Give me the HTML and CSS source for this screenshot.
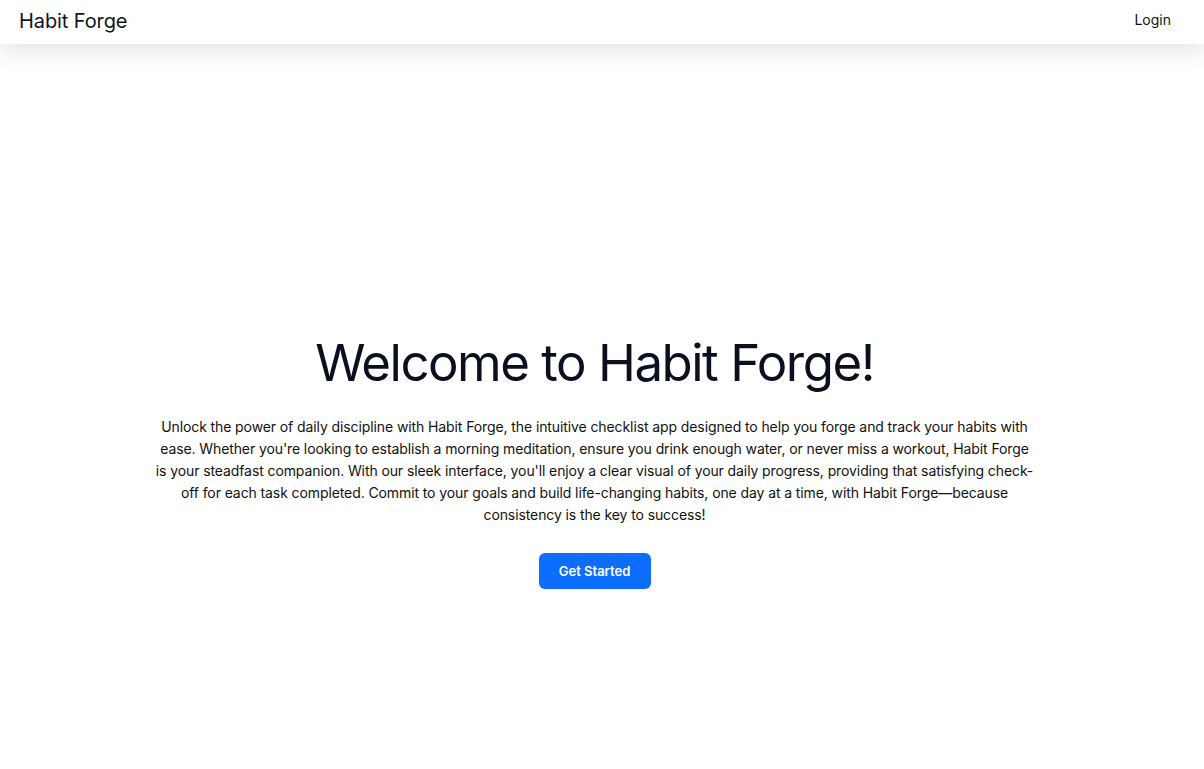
FILE: index.html
```html
<!DOCTYPE html>
<html lang="en">
<head>
<meta charset="utf-8">
<title>Habit Forge</title>
<link rel="stylesheet" href="styles.css">
</head>
<body>
<header class="topbar">
  <div class="brand">Habit Forge</div>
  <a class="login" href="#">Login</a>
</header>
<main class="hero">
  <h1 class="title">Welcome to Habit Forge!</h1>
  <p class="lead">Unlock the power of daily discipline with Habit Forge, the intuitive checklist app designed to help you forge and track your habits with ease. Whether you're looking to establish a morning meditation, ensure you drink enough water, or never miss a workout, Habit Forge is your steadfast companion. With our sleek interface, you'll enjoy a clear visual of your daily progress, providing that satisfying check-off for each task completed. Commit to your goals and build life-changing habits, one day at a time, with Habit Forge—because consistency is the key to success!</p>
  <button class="cta">Get Started</button>
</main>
</body>
</html>
```

FILE: styles.css
```css
* { box-sizing: border-box; }
html, body { margin: 0; padding: 0; background: #ffffff; }
body {
  font-family: Inter, "Noto Sans", "Liberation Sans", sans-serif;
  color: #111;
  -webkit-font-smoothing: antialiased;
  min-height: 769px;
}
.topbar {
  height: 44px;
  display: flex;
  align-items: center;
  justify-content: space-between;
  padding: 0 33px 0 19px;
  background: #fff;
  box-shadow: 0 6px 26px rgba(0, 0, 0, 0.12);
  position: relative;
  z-index: 1;
}
.brand {
  font-size: 20px;
  color: #0f1424;
  letter-spacing: -0.1px;
  line-height: 1;
  padding-bottom: 2px;
}
.login {
  font-size: 14px;
  color: #111;
  text-decoration: none;
  padding-bottom: 6px;
}
.hero {
  display: flex;
  flex-direction: column;
  align-items: center;
  padding: 288px 15px 0 0;
}
.title {
  margin: 0;
  font-size: 51px;
  font-weight: 400;
  line-height: 1.2;
  letter-spacing: -1.5px;
  color: #0b1020;
}
.lead {
  max-width: 880px;
  margin: 23px 0 0;
  text-align: center;
  font-size: 14px;
  line-height: 22px;
  letter-spacing: -0.1px;
  color: #111;
}
.cta {
  margin-top: 27px;
  width: 112px;
  height: 36px;
  border: 0;
  border-radius: 6px;
  background: #0d6efd;
  color: #fff;
  font-family: inherit;
  font-size: 13px;
  font-weight: 600;
  cursor: pointer;
}
```
